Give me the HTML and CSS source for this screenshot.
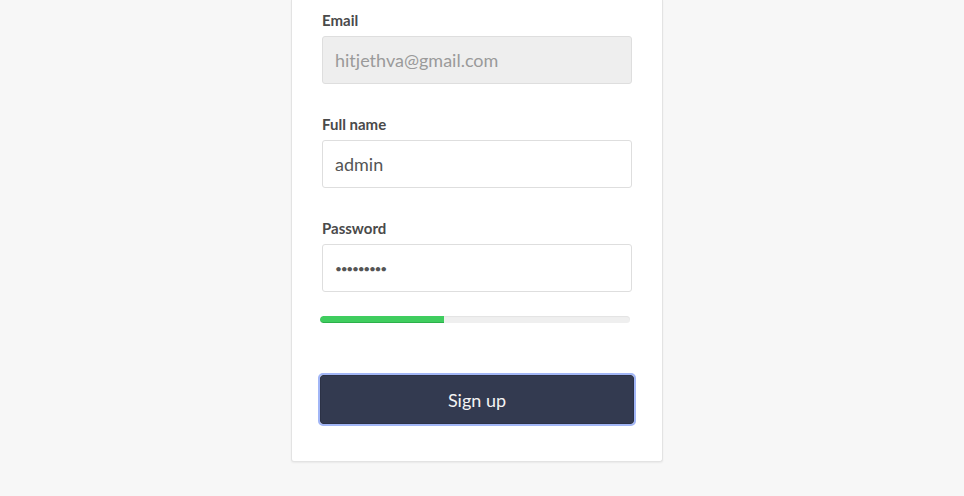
FILE: index.html
```html
<!DOCTYPE html>
<html lang="en">
<head>
<meta charset="utf-8">
<title>Sign up</title>
<link rel="stylesheet" href="styles.css">
</head>
<body>
<main class="page">
  <form class="card">
    <div class="field">
      <label class="label" for="email">Email</label>
      <input class="input input-disabled" id="email" type="email" value="hitjethva@gmail.com" disabled>
    </div>
    <div class="field">
      <label class="label" for="name">Full name</label>
      <input class="input" id="name" type="text" value="admin">
    </div>
    <div class="field field-last">
      <label class="label" for="pw">Password</label>
      <input class="input input-pw" id="pw" type="password" value="123456789">
    </div>
    <div class="meter"><div class="meter-fill" style="width: 40%"></div></div>
    <button class="btn" type="button">Sign up</button>
  </form>
</main>
</body>
</html>
```
FILE: styles.css
```css
html, body {
  margin: 0;
  padding: 0;
  background: #f7f7f7;
  height: 100%;
  overflow: hidden;
}
body {
  font-family: "Source Sans Pro", Lato, "Liberation Sans", sans-serif;
  color: #4a4a4a;
}
.page {
  display: flex;
  justify-content: center;
  padding-right: 10px;
}
.card {
  width: 310px;
  background: #fff;
  border: 1px solid #e3e3e3;
  border-top: none;
  border-radius: 0 0 3px 3px;
  box-shadow: 0 1px 2px rgba(0,0,0,0.06);
  padding: 10px 30px 37px;
  display: flex;
  flex-direction: column;
}
.field {
  display: flex;
  flex-direction: column;
  gap: 6px;
  margin-bottom: 30px;
}
.field-last {
  margin-bottom: 24px;
}
.label {
  font-size: 15px;
  font-weight: 700;
  line-height: 20px;
  color: #4a4a4a;
}
.input {
  box-sizing: border-box;
  height: 48px;
  width: 100%;
  border: 1px solid #dedede;
  border-radius: 3px;
  padding: 0 12px;
  font-family: inherit;
  font-size: 18px;
  color: #555;
  background: #fff;
  outline: none;
  margin: 0;
}
.input-disabled {
  background: #eeeeee;
  color: #9a9a9a;
  -webkit-text-fill-color: #9a9a9a;
  opacity: 1;
}
.input-pw {
  font-size: 12px;
  letter-spacing: -1.3px;
}
.meter {
  height: 7px;
  margin: 0 2px 0 -2px;
  background: #efefef;
  border-radius: 4px;
  box-shadow: inset 0 1px 1px rgba(0,0,0,0.05);
  overflow: hidden;
}
.meter-fill {
  height: 100%;
  background: #3fcd5f;
  border-bottom: 1px solid #2bb04a;
  box-sizing: border-box;
  border-radius: 4px 0 0 4px;
}
.btn {
  margin: 52px -2px 0 -2px;
  height: 49px;
  box-sizing: border-box;
  background: #333a50;
  color: #f3f3f3;
  border: 1px solid #2c3246;
  outline: 2px solid #a2b6f6;
  border-radius: 3px;
  font-family: inherit;
  font-size: 18px;
  cursor: pointer;
}
```
